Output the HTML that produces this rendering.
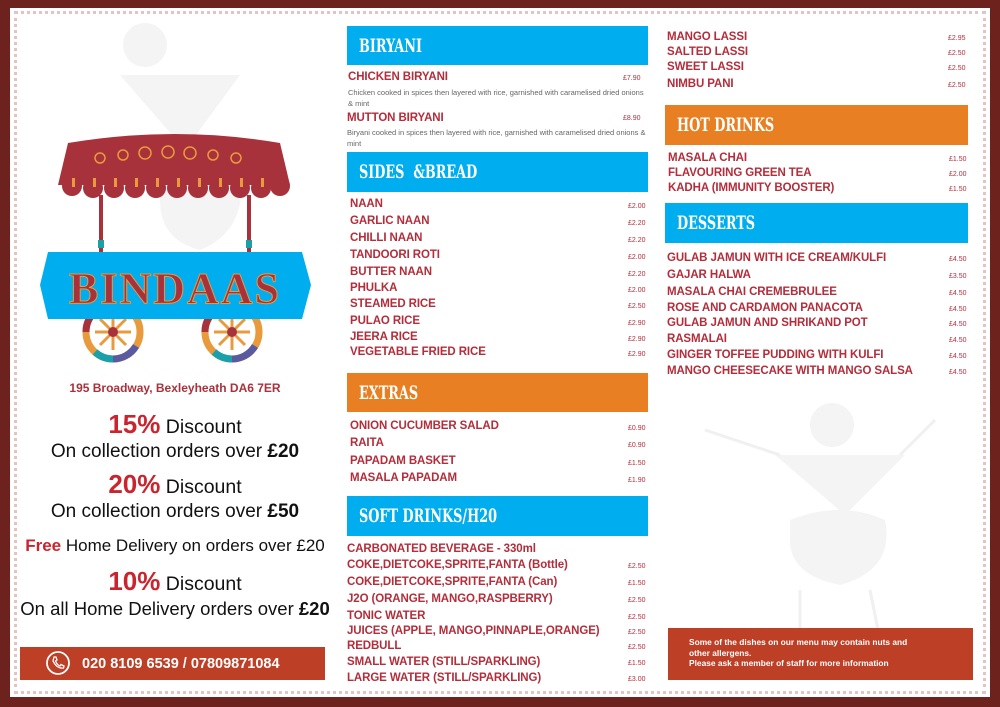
<!DOCTYPE html>
<html><head><meta charset="utf-8"><style>
*{margin:0;padding:0;box-sizing:border-box}
body{width:1000px;height:707px;position:relative;overflow:hidden;background:#fff;font-family:"Liberation Sans",sans-serif}
.frame{position:absolute;inset:0;border:solid #6e221d;border-width:8px 10px 10px 10px}
.dots{position:absolute;left:14px;top:11px;right:14px;bottom:13px;border:3px dotted #e2c4c4}
.i{position:absolute;color:#b32d3a;font-weight:bold;font-size:11.5px;white-space:nowrap;letter-spacing:-0.1px}
.p{position:absolute;color:#b32d3a;font-size:7px;white-space:nowrap}
.d{position:absolute;color:#666;font-size:7.5px;line-height:11px;width:300px}
.h{position:absolute;color:#fff;font-family:"DejaVu Serif Condensed","DejaVu Serif",serif;font-weight:bold;font-size:19px;padding-left:12px;display:flex;align-items:center}
.h span{display:inline-block;transform:scaleX(0.75);transform-origin:left center}
.b{background:#00aeef}.o{background:#e88023}
.c{position:absolute;left:14px;width:322px;text-align:center;color:#111;white-space:nowrap}
.r{color:#c8252f;font-weight:bold}
</style></head><body>
<div class="frame"></div><div class="dots"></div>
<svg style="position:absolute;left:0;top:0" width="1000" height="707">
<g fill="#f4f4f4">
<circle cx="145" cy="45" r="22"/><polygon points="120,75 240,75 185,150"/>
<path d="M160 160 Q200 140 240 165 Q250 230 200 250 Q160 240 160 200Z"/>
<circle cx="832" cy="425" r="22"/><polygon points="775,455 905,455 845,515"/>
<path d="M790 520 Q840 500 885 520 Q895 570 840 585 Q790 575 790 540Z"/>
</g>
<g stroke="#f0f0f0" stroke-width="3" fill="none"><path d="M780 455 L705 430"/><path d="M900 455 L935 420"/><path d="M800 590 L800 640"/><path d="M870 590 L880 640"/></g>
<path d="M68 143 Q175 125 280 143 L290 185 L58 185Z" fill="#a8323c"/>
<g fill="#a8323c"><circle cx="72" cy="186" r="10"/><circle cx="93" cy="188" r="10"/><circle cx="114" cy="188" r="10"/><circle cx="135" cy="188" r="10"/><circle cx="156" cy="188" r="10"/><circle cx="177" cy="188" r="10"/><circle cx="198" cy="188" r="10"/><circle cx="219" cy="188" r="10"/><circle cx="240" cy="188" r="10"/><circle cx="261" cy="188" r="10"/><circle cx="280" cy="186" r="10"/></g>
<g fill="none" stroke="#e89a3c" stroke-width="1.5"><circle cx="100" cy="158" r="5"/><circle cx="123" cy="155" r="5"/><circle cx="145" cy="153" r="6"/><circle cx="168" cy="152" r="6"/><circle cx="190" cy="153" r="6"/><circle cx="213" cy="155" r="5"/><circle cx="236" cy="158" r="5"/></g>
<g fill="#e89a3c"><rect x="72" y="178" width="3" height="9"/><rect x="93" y="178" width="3" height="9"/><rect x="114" y="178" width="3" height="9"/><rect x="135" y="178" width="3" height="9"/><rect x="156" y="178" width="3" height="9"/><rect x="177" y="178" width="3" height="9"/><rect x="198" y="178" width="3" height="9"/><rect x="219" y="178" width="3" height="9"/><rect x="240" y="178" width="3" height="9"/><rect x="261" y="178" width="3" height="9"/></g>
<rect x="99" y="195" width="4" height="58" fill="#a8323c"/><rect x="247" y="195" width="4" height="58" fill="#a8323c"/>
<rect x="98" y="240" width="6" height="8" fill="#1aa0a8"/><rect x="246" y="240" width="6" height="8" fill="#1aa0a8"/>
<g stroke-width="7" fill="none"><circle cx="113" cy="332" r="27" stroke="#e89a3c"/><circle cx="232" cy="332" r="27" stroke="#e89a3c"/>
<path d="M86 332 A27 27 0 0 1 100 308" stroke="#a8323c"/><path d="M113 359 A27 27 0 0 0 136 346" stroke="#5a5aa0"/><path d="M95 352 A27 27 0 0 0 113 359" stroke="#1aa0a8"/>
<path d="M205 332 A27 27 0 0 1 219 308" stroke="#a8323c"/><path d="M232 359 A27 27 0 0 0 255 346" stroke="#5a5aa0"/><path d="M214 352 A27 27 0 0 0 232 359" stroke="#1aa0a8"/></g>
<g stroke="#e89a3c" stroke-width="3"><path d="M95 332H131M113 314V350M100 319L126 345M126 319L100 345"/><path d="M214 332H250M232 314V350M219 319L245 345M245 319L219 345"/></g>
<circle cx="113" cy="332" r="5" fill="#a8323c"/><circle cx="232" cy="332" r="5" fill="#a8323c"/>
<polygon points="48,252 302,252 311,285 302,319 48,319 40,285" fill="#00aeef"/>
<text x="175" y="303" text-anchor="middle" font-family="Liberation Serif,serif" font-weight="bold" font-size="44" fill="#a8323c" stroke="#e89a3c" stroke-width="1" letter-spacing="2">BINDAAS</text>
</svg>
<div class="c" style="top:381px;font-size:12px;color:#a8323c;font-weight:bold">195 Broadway, Bexleyheath DA6 7ER</div>
<div class="c" style="top:409px;font-size:19.5px"><span class="r" style="font-size:26px">15%</span> Discount</div>
<div class="c" style="top:441px;font-size:19px">On collection orders over <b>£20</b></div>
<div class="c" style="top:469px;font-size:19.5px"><span class="r" style="font-size:26px">20%</span> Discount</div>
<div class="c" style="top:501px;font-size:19px">On collection orders over <b>£50</b></div>
<div class="c" style="top:536px;font-size:17px"><span class="r">Free</span> Home Delivery on orders over £20</div>
<div class="c" style="top:566px;font-size:19.5px"><span class="r" style="font-size:26px">10%</span> Discount</div>
<div class="c" style="top:598px;font-size:18.5px">On all Home Delivery orders over <b>£20</b></div>
<div style="position:absolute;left:20px;top:647px;width:305px;height:33px;background:#bc3f26;color:#fff;font-weight:bold;font-size:14.5px;display:flex;align-items:center;padding-left:62px">020 8109 6539 / 07809871084</div>
<svg style="position:absolute;left:45px;top:650px" width="26" height="26"><circle cx="13" cy="13" r="11" fill="none" stroke="#fff" stroke-width="1.8"/><path d="M9 7 L11 7 L12 10 L10.5 11 Q12 15 15 16 L16 14.5 L19 16 L18.5 18 Q12 19 8 11Z" fill="none" stroke="#fff" stroke-width="1.3"/></svg>

<div class="h b" style="left:347px;top:26px;width:301px;height:39px"><span>BIRYANI</span></div>
<div class="i" style="left:348px;top:71px">CHICKEN BIRYANI</div><div class="p" style="left:623px;top:75px">£7.90</div>
<div class="d" style="left:348px;top:87px">Chicken cooked in spices then layered with rice, garnished with caramelised dried onions &amp; mint</div>
<div class="i" style="left:347px;top:112px">MUTTON BIRYANI</div><div class="p" style="left:623px;top:115px">£8.90</div>
<div class="d" style="left:347px;top:127px">Biryani cooked in spices then layered with rice, garnished with caramelised dried onions &amp; mint</div>
<div class="h b" style="left:347px;top:152px;width:301px;height:40px"><span>SIDES &nbsp;&amp;BREAD</span></div>
<div class="i" style="left:350px;top:198px">NAAN</div><div class="p" style="left:628px;top:203px">£2.00</div>
<div class="i" style="left:350px;top:215px">GARLIC NAAN</div><div class="p" style="left:628px;top:220px">£2.20</div>
<div class="i" style="left:350px;top:232px">CHILLI NAAN</div><div class="p" style="left:628px;top:237px">£2.20</div>
<div class="i" style="left:350px;top:249px">TANDOORI ROTI</div><div class="p" style="left:628px;top:254px">£2.00</div>
<div class="i" style="left:350px;top:266px">BUTTER NAAN</div><div class="p" style="left:628px;top:271px">£2.20</div>
<div class="i" style="left:350px;top:282px">PHULKA</div><div class="p" style="left:628px;top:287px">£2.00</div>
<div class="i" style="left:350px;top:298px">STEAMED RICE</div><div class="p" style="left:628px;top:303px">£2.50</div>
<div class="i" style="left:350px;top:315px">PULAO RICE</div><div class="p" style="left:628px;top:320px">£2.90</div>
<div class="i" style="left:350px;top:331px">JEERA RICE</div><div class="p" style="left:628px;top:336px">£2.90</div>
<div class="i" style="left:350px;top:346px">VEGETABLE FRIED RICE</div><div class="p" style="left:628px;top:351px">£2.90</div>
<div class="h o" style="left:347px;top:373px;width:301px;height:39px"><span>EXTRAS</span></div>
<div class="i" style="left:350px;top:420px">ONION CUCUMBER SALAD</div><div class="p" style="left:628px;top:425px">£0.90</div>
<div class="i" style="left:350px;top:437px">RAITA</div><div class="p" style="left:628px;top:442px">£0.90</div>
<div class="i" style="left:350px;top:455px">PAPADAM BASKET</div><div class="p" style="left:628px;top:460px">£1.50</div>
<div class="i" style="left:350px;top:472px">MASALA PAPADAM</div><div class="p" style="left:628px;top:477px">£1.90</div>
<div class="h b" style="left:347px;top:496px;width:301px;height:40px"><span>SOFT DRINKS/H20</span></div>
<div class="i" style="left:347px;top:543px">CARBONATED BEVERAGE - 330ml</div>
<div class="i" style="left:347px;top:559px">COKE,DIETCOKE,SPRITE,FANTA (Bottle)</div><div class="p" style="left:628px;top:563px">£2.50</div>
<div class="i" style="left:347px;top:576px">COKE,DIETCOKE,SPRITE,FANTA (Can)</div><div class="p" style="left:628px;top:580px">£1.50</div>
<div class="i" style="left:347px;top:593px">J2O (ORANGE, MANGO,RASPBERRY)</div><div class="p" style="left:628px;top:597px">£2.50</div>
<div class="i" style="left:347px;top:610px">TONIC WATER</div><div class="p" style="left:628px;top:614px">£2.50</div>
<div class="i" style="left:347px;top:625px">JUICES (APPLE, MANGO,PINNAPLE,ORANGE)</div><div class="p" style="left:628px;top:629px">£2.50</div>
<div class="i" style="left:347px;top:640px">REDBULL</div><div class="p" style="left:628px;top:644px">£2.50</div>
<div class="i" style="left:347px;top:656px">SMALL WATER (STILL/SPARKLING)</div><div class="p" style="left:628px;top:660px">£1.50</div>
<div class="i" style="left:347px;top:672px">LARGE WATER (STILL/SPARKLING)</div><div class="p" style="left:628px;top:676px">£3.00</div>

<div class="i" style="left:667px;top:31px">MANGO LASSI</div><div class="p" style="left:948px;top:35px">£2.95</div>
<div class="i" style="left:667px;top:46px">SALTED LASSI</div><div class="p" style="left:948px;top:50px">£2.50</div>
<div class="i" style="left:667px;top:61px">SWEET LASSI</div><div class="p" style="left:948px;top:65px">£2.50</div>
<div class="i" style="left:667px;top:78px">NIMBU PANI</div><div class="p" style="left:948px;top:82px">£2.50</div>
<div class="h o" style="left:665px;top:105px;width:303px;height:40px"><span>HOT DRINKS</span></div>
<div class="i" style="left:668px;top:152px">MASALA CHAI</div><div class="p" style="left:949px;top:156px">£1.50</div>
<div class="i" style="left:668px;top:167px">FLAVOURING GREEN TEA</div><div class="p" style="left:949px;top:171px">£2.00</div>
<div class="i" style="left:668px;top:182px">KADHA (IMMUNITY BOOSTER)</div><div class="p" style="left:949px;top:186px">£1.50</div>
<div class="h b" style="left:665px;top:203px;width:303px;height:40px"><span>DESSERTS</span></div>
<div class="i" style="left:667px;top:252px">GULAB JAMUN WITH ICE CREAM/KULFI</div><div class="p" style="left:949px;top:256px">£4.50</div>
<div class="i" style="left:667px;top:269px">GAJAR HALWA</div><div class="p" style="left:949px;top:273px">£3.50</div>
<div class="i" style="left:667px;top:286px">MASALA CHAI CREMEBRULEE</div><div class="p" style="left:949px;top:290px">£4.50</div>
<div class="i" style="left:667px;top:302px">ROSE AND CARDAMON PANACOTA</div><div class="p" style="left:949px;top:306px">£4.50</div>
<div class="i" style="left:667px;top:317px">GULAB JAMUN AND SHRIKAND POT</div><div class="p" style="left:949px;top:321px">£4.50</div>
<div class="i" style="left:667px;top:333px">RASMALAI</div><div class="p" style="left:949px;top:337px">£4.50</div>
<div class="i" style="left:667px;top:349px">GINGER TOFFEE PUDDING WITH KULFI</div><div class="p" style="left:949px;top:353px">£4.50</div>
<div class="i" style="left:667px;top:365px">MANGO CHEESECAKE WITH MANGO SALSA</div><div class="p" style="left:949px;top:369px">£4.50</div>
<div style="position:absolute;left:668px;top:628px;width:305px;height:52px;background:#bc3f26;color:#fff;font-weight:bold;font-size:8.4px;line-height:10.5px;padding:9px 0 0 21px">Some of the dishes on our menu may contain nuts and<br>other allergens.<br>Please ask a member of staff for more information</div>
</body></html>
